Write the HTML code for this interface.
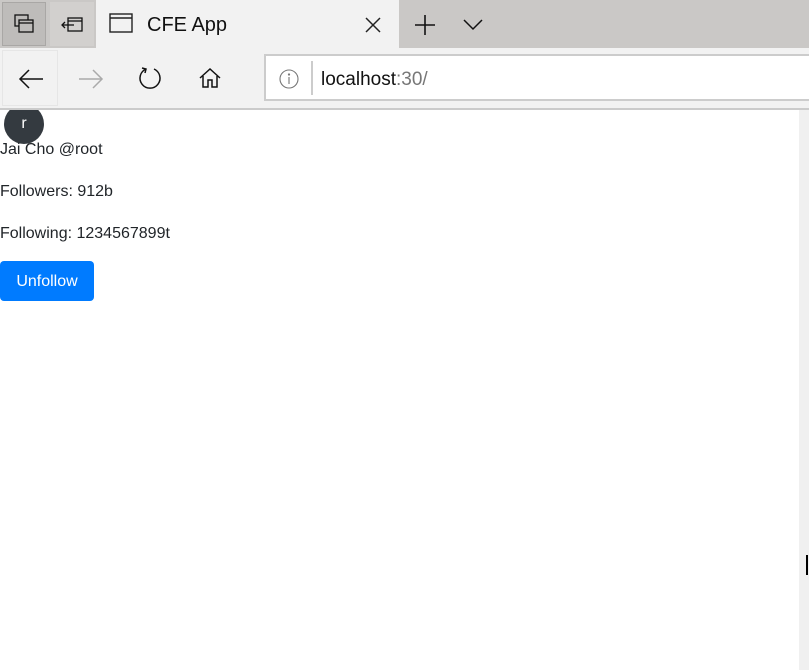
<!DOCTYPE html>
<html><head><style>
body{margin:0;width:809px;height:670px;overflow:hidden;position:relative;font-family:"Liberation Sans",sans-serif;background:#fff}
.a{position:absolute}
.t{color:#212529;font-size:16px;left:0}
</style></head><body>
<div class="a" style="left:0;top:0;width:809px;height:48px;background:#cac8c6"></div>
<div class="a" style="left:2px;top:2px;width:44px;height:44px;background:#bebcba;border:1px solid #a9a7a5;box-sizing:border-box"></div>
<div class="a" style="left:50px;top:2px;width:44px;height:44px;background:#d2d0ce"></div>
<svg class="a" style="left:14px;top:14px" width="22" height="22" fill="none" stroke="#111" stroke-width="1.3"><rect x="1" y="1" width="13" height="11"/><rect x="5" y="6" width="14" height="12" fill="#bebcba"/><line x1="5" y1="9" x2="19" y2="9"/></svg>
<svg class="a" style="left:60px;top:14px" width="24" height="22" fill="none" stroke="#111" stroke-width="1.3"><rect x="8" y="4" width="14" height="13"/><line x1="8" y1="7" x2="22" y2="7"/><line x1="2" y1="11" x2="14" y2="11"/><polyline points="5,8 2,11 5,14"/></svg>
<div class="a" style="left:96px;top:0;width:303px;height:48px;background:#f2f2f2"></div>
<svg class="a" style="left:109px;top:13px" width="26" height="22" fill="none" stroke="#222" stroke-width="1.4"><rect x="1" y="1" width="22" height="18"/><line x1="1" y1="5" x2="23" y2="5"/></svg>
<div class="a" style="left:147px;top:14px;font-size:20px;color:#111">CFE App</div>
<svg class="a" style="left:364px;top:16px" width="18" height="18" stroke="#222" stroke-width="1.5"><line x1="2" y1="2" x2="16" y2="16"/><line x1="16" y1="2" x2="2" y2="16"/></svg>
<svg class="a" style="left:414px;top:14px" width="22" height="22" stroke="#111" stroke-width="1.6"><line x1="11" y1="1" x2="11" y2="21"/><line x1="1" y1="11" x2="21" y2="11"/></svg>
<svg class="a" style="left:462px;top:18px" width="22" height="14" fill="none" stroke="#111" stroke-width="1.5"><polyline points="2,2 11,11 20,2"/></svg>
<div class="a" style="left:0;top:48px;width:809px;height:60px;background:#f2f2f2;border-bottom:2px solid #cbcbcb"></div>
<div class="a" style="left:2px;top:50px;width:56px;height:56px;border:1px solid #e6e6e6;box-sizing:border-box"></div>
<svg class="a" style="left:18px;top:68px" width="26" height="22" fill="none" stroke="#111" stroke-width="1.5"><line x1="2" y1="11" x2="25" y2="11"/><polyline points="11,2 2,11 11,20"/></svg>
<svg class="a" style="left:78px;top:68px" width="26" height="22" fill="none" stroke="#aaa" stroke-width="1.5"><line x1="1" y1="11" x2="24" y2="11"/><polyline points="15,2 24,11 15,20"/></svg>
<svg class="a" style="left:138px;top:66px" width="24" height="24" fill="none" stroke="#111" stroke-width="1.5"><path d="M8 3 A10 10 0 1 0 16 3"/><polyline points="4,2 8,3 7,7"/></svg>
<svg class="a" style="left:198px;top:67px" width="24" height="22" fill="none" stroke="#111" stroke-width="1.5"><polyline points="2,11 12,2 22,11"/><polyline points="5,9 5,20 10,20 10,13 14,13 14,20 19,20 19,9"/></svg>
<div class="a" style="left:264px;top:54px;width:560px;height:47px;background:#fff;border:2px solid #ccc;box-sizing:border-box"></div>
<svg class="a" style="left:278px;top:68px" width="22" height="22" fill="none" stroke="#777" stroke-width="1.1"><circle cx="11" cy="11" r="9"/><line x1="11" y1="9" x2="11" y2="16"/><circle cx="11" cy="6.5" r=".6" fill="#777"/></svg>
<div class="a" style="left:311px;top:61px;width:2px;height:34px;background:#ccc"></div>
<div class="a" style="left:321px;top:69px;font-size:19px;color:#111">localhost<span style="color:#777">:30/</span></div>
<div class="a" style="left:799px;top:110px;width:10px;height:560px;background:#f0f0f0"></div>
<div class="a" style="left:806px;top:555px;width:2px;height:20px;background:#000"></div>
<div class="a" style="left:0;top:110px;width:799px;height:560px;overflow:hidden">
<div class="a" style="left:4px;top:-6px;width:40px;height:40px;border-radius:50%;background:#343a40;color:#fff;font-size:16px;text-align:center;line-height:40px">r</div>
</div>
<div class="a t" style="top:141px">Jai Cho @root</div>
<div class="a t" style="top:183px">Followers: 912b</div>
<div class="a t" style="top:225px">Following: 1234567899t</div>
<div class="a" style="left:0;top:261px;width:94px;height:40px;background:#007bff;border-radius:4px;color:#fff;font-size:16px;text-align:center;line-height:42px">Unfollow</div>
</body></html>
